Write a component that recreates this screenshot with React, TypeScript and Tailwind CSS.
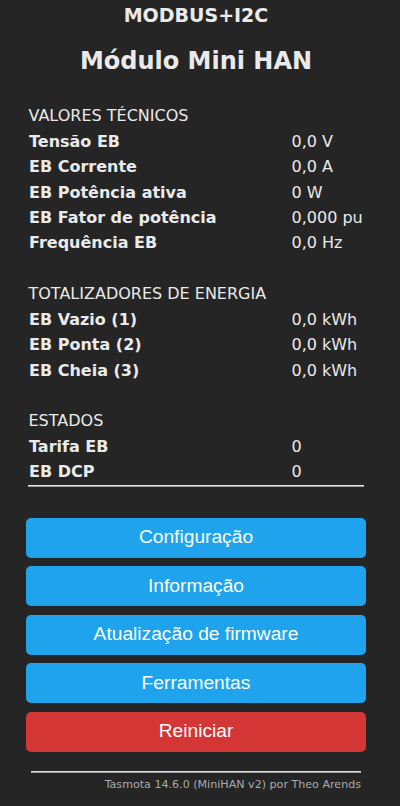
import React from "react";

type Row = { kind: "h"; text: string } | { kind: "r"; label: string; value: string } | { kind: "b" };

const rows: Row[] = [
  { kind: "h", text: "VALORES TÉCNICOS" },
  { kind: "r", label: "Tensão EB", value: "0,0 V" },
  { kind: "r", label: "EB Corrente", value: "0,0 A" },
  { kind: "r", label: "EB Potência ativa", value: "0 W" },
  { kind: "r", label: "EB Fator de potência", value: "0,000 pu" },
  { kind: "r", label: "Frequência EB", value: "0,0 Hz" },
  { kind: "b" },
  { kind: "h", text: "TOTALIZADORES DE ENERGIA" },
  { kind: "r", label: "EB Vazio (1)", value: "0,0 kWh" },
  { kind: "r", label: "EB Ponta (2)", value: "0,0 kWh" },
  { kind: "r", label: "EB Cheia (3)", value: "0,0 kWh" },
  { kind: "b" },
  { kind: "h", text: "ESTADOS" },
  { kind: "r", label: "Tarifa EB", value: "0" },
  { kind: "r", label: "EB DCP", value: "0" },
];

const buttons = [
  { text: "Configuração", red: false },
  { text: "Informação", red: false },
  { text: "Atualização de firmware", red: false },
  { text: "Ferramentas", red: false },
  { text: "Reiniciar", red: true },
];

export default function App() {
  return (
    <div
      className="min-h-[806px] w-[400px] bg-[#252525] text-[#eaeaea]"
      style={{ fontFamily: '"DejaVu Sans", Verdana, sans-serif' }}
    >
      <div className="ml-[26px] w-[340px]">
        <div className="h-[30px] text-center text-[19px] font-bold leading-[30px]">MODBUS+I2C</div>
        <div className="mt-[11px] h-[40px] text-center text-[24px] font-bold leading-[40px]">Módulo Mini HAN</div>

        <div className="mx-[2px] mt-[22.3px]">
          {rows.map((r, i) => {
            if (r.kind === "b") return <div key={i} className="h-[25.43px]" />;
            if (r.kind === "h")
              return (
                <div key={i} className="h-[25.43px] pl-[0.5px] text-[16px] leading-[25.43px]">
                  {r.text}
                </div>
              );
            return (
              <div key={i} className="grid h-[25.43px] grid-cols-[263.5px_1fr] text-[16px] leading-[25.43px]">
                <div className="pl-[1px] font-bold">{r.label}</div>
                <div>{r.value}</div>
              </div>
            );
          })}
          <div className="h-[2px] border-t border-b border-t-[#e2e2e2] border-b-[#9a9a9a]" />
        </div>

        <div className="mt-[31px] flex flex-col gap-[8.5px]">
          {buttons.map((b) => (
            <div
              key={b.text}
              className={`flex h-[40px] items-center justify-center rounded-[5px] text-[19.2px] text-[#faffff] ${
                b.red ? "bg-[#d43535]" : "bg-[#1fa3ec]"
              }`}
              style={{ fontFamily: '"Liberation Sans", Arial, sans-serif' }}
            >
              {b.text}
            </div>
          ))}
        </div>

        <div className="mx-[5px] mt-[19px] h-[2px] border-t border-b border-t-[#e2e2e2] border-b-[#9a9a9a]" />
        <div className="mt-[5.5px] pr-[5px] text-right text-[11.1px] leading-[13px] text-[#aaaaaa]">
          Tasmota 14.6.0 (MiniHAN v2) por Theo Arends
        </div>
      </div>
    </div>
  );
}
